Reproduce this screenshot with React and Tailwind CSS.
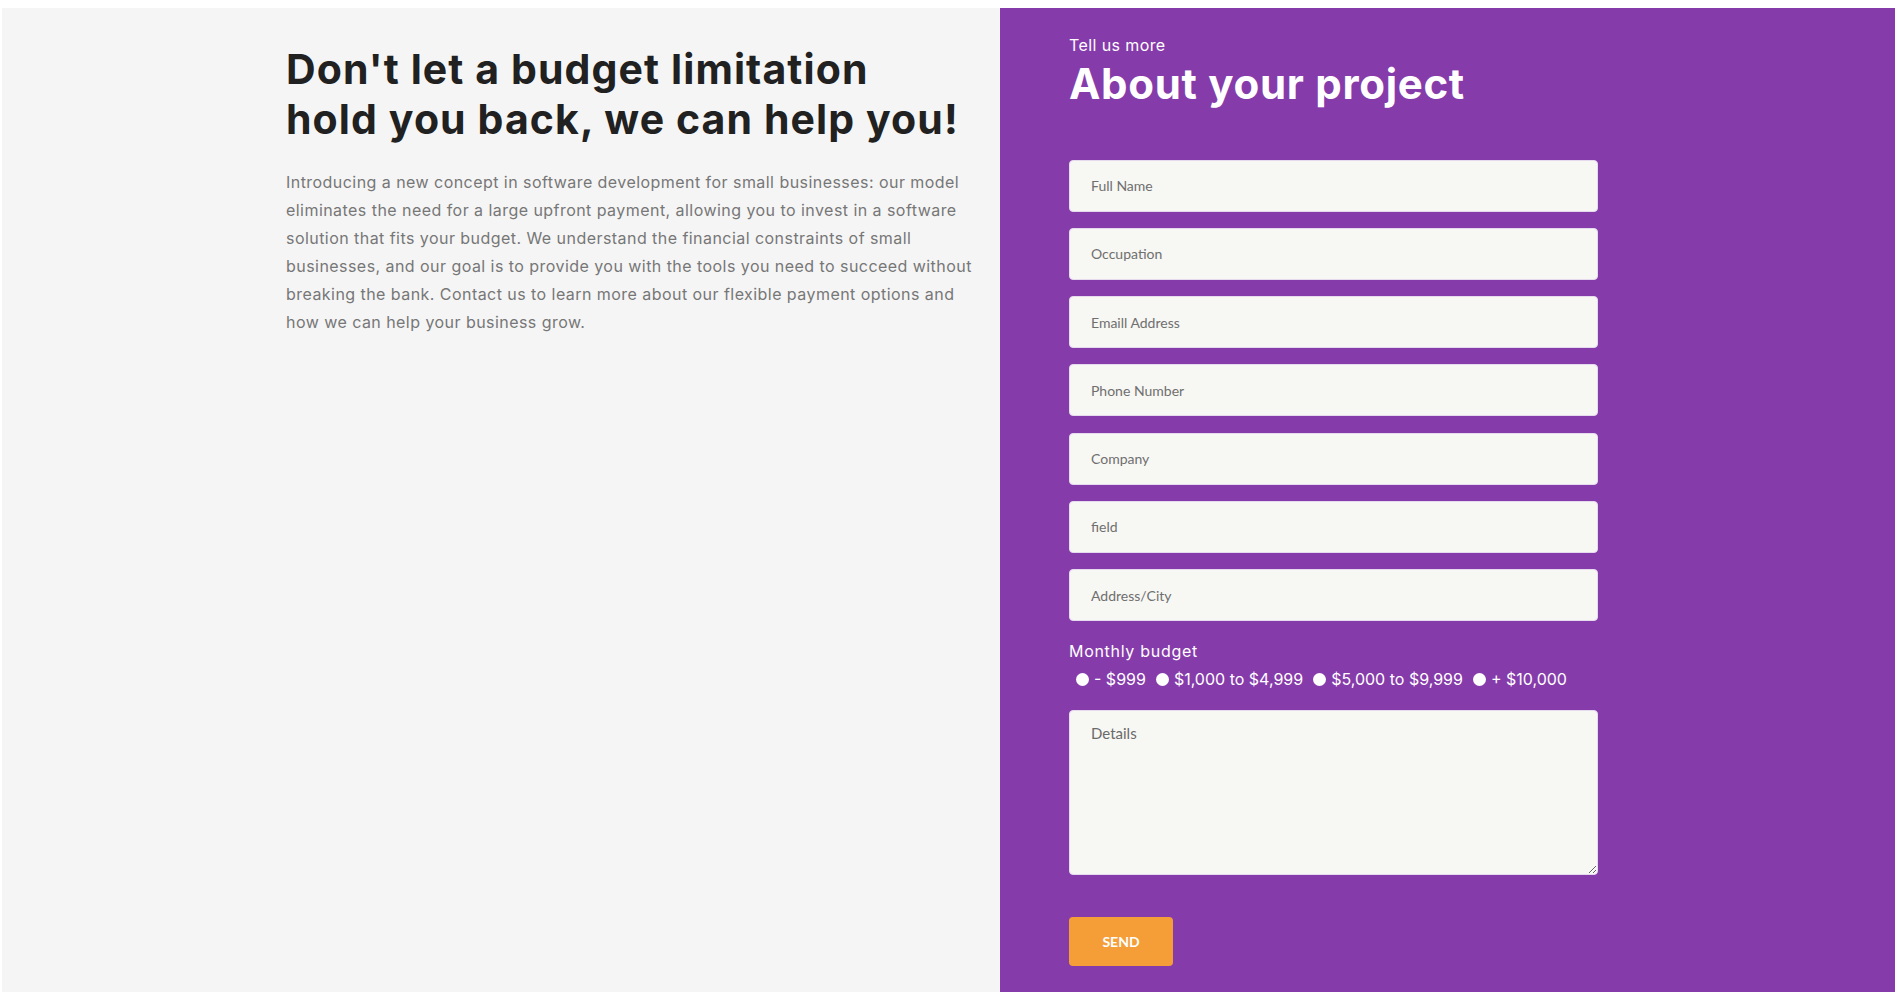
import React, { useState } from "react";

const FIELDS = ["Full Name", "Occupation", "Emaill Address", "Phone Number", "Company", "field", "Address/City"];
const BUDGETS = ["- $999", "$1,000 to $4,999", "$5,000 to $9,999", "+ $10,000"];

const head = { fontFamily: "Inter, 'Noto Sans', sans-serif" };
const body = { fontFamily: "Lato, 'Open Sans', sans-serif" };

export default function App() {
  const [budget, setBudget] = useState("");

  return (
    <div className="min-h-screen bg-white pt-2 pl-[2px]">
      <div className="flex w-[1893px] h-[984px]">
        {/* left copy */}
        <div className="w-[998px] bg-[#f5f5f5] pl-[284px] pt-[36px]" style={head}>
          <h1 className="w-[700px] text-[41px] leading-[50px] font-bold text-[#212121] tracking-[1.1px]">
            Don't let a budget limitation<br />hold you back, we can help you!
          </h1>
          <p className="w-[692px] mt-[24px] text-[16px] leading-[28px] text-[#777777] tracking-[0.45px]">
            Introducing a new concept in software development for small businesses: our model eliminates the need for a large upfront payment, allowing you to invest in a software solution that fits your budget. We understand the financial constraints of small businesses, and our goal is to provide you with the tools you need to succeed without breaking the bank. Contact us to learn more about our flexible payment options and how we can help your business grow.
          </p>
        </div>

        {/* form */}
        <div className="w-[895px] bg-[#863bab] pl-[69px] pt-[25px]">
          <p className="text-[16px] leading-[24px] text-white tracking-[0.4px]" style={head}>Tell us more</p>
          <h2 className="mt-[3px] text-[42px] leading-[48px] font-bold text-white tracking-[0.7px]" style={head}>
            About your project
          </h2>

          <form className="w-[529px] mt-[51.5px]" style={body} onSubmit={(e) => e.preventDefault()}>
            <div className="flex flex-col gap-[16.3px]">
              {FIELDS.map((f) => (
                <input key={f} type="text" placeholder={f}
                  className="h-[52px] w-full rounded-[4px] border border-[#e6daee] bg-[#f7f7f3] px-[21px] text-[14px] text-[#333] placeholder:text-[#6f6f6f] outline-none" />
              ))}
            </div>

            <p className="mt-[18px] text-[16px] leading-[24px] text-white tracking-[0.7px]" style={head}>Monthly budget</p>
            <div className="flex items-center h-[20px] mt-[6px] text-[16px] text-white" style={head}>
              {BUDGETS.map((b) => (
                <label key={b} className="flex items-center mr-[3px] cursor-pointer">
                  <input type="radio" name="budget" checked={budget === b} onChange={() => setBudget(b)}
                    className="appearance-none w-[13px] h-[13px] rounded-full bg-white ml-[7px] mr-[5px] checked:bg-[#f59e37]" />
                  <span>{b}</span>
                </label>
              ))}
            </div>

            <textarea placeholder="Details"
              className="block mt-[21px] h-[165px] w-full rounded-[4px] border border-[#e6daee] bg-[#f7f7f3] px-[21px] py-[11px] text-[15px] text-[#333] placeholder:text-[#6a6a6a] outline-none" />

            <button type="submit"
              className="mt-[42px] w-[104px] h-[49px] rounded-[4px] bg-[#f59e37] text-white text-[14px] font-bold">
              SEND
            </button>
          </form>
        </div>
      </div>
    </div>
  );
}
